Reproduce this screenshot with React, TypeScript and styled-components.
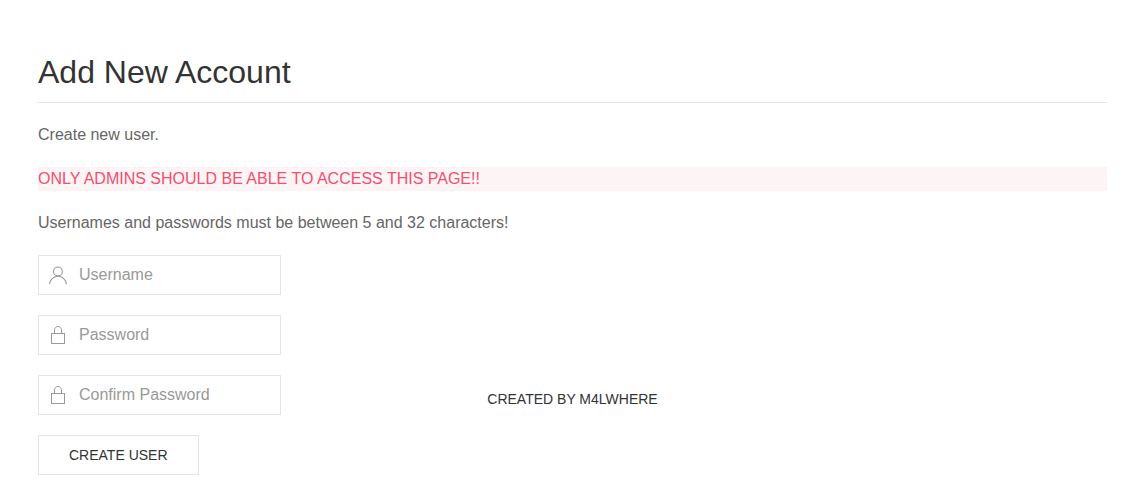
import React from "react";
import styled, { createGlobalStyle } from "styled-components";

const GlobalStyle = createGlobalStyle`
  *, *::before, *::after { box-sizing: border-box; }
  body {
    margin: 0;
    background: #fff;
    color: #666;
    font: 16px/24px "Liberation Sans", Arial, sans-serif;
  }
`;

const Page = styled.main`
  padding: 52px 34px 12px 38px;
`;

const Title = styled.h1`
  margin: 0 0 20px;
  padding-bottom: 10px;
  border-bottom: 1px solid #e5e5e5;
  color: #333;
  font-size: 32px;
  font-weight: 400;
  line-height: 40px;
`;

const Text = styled.p`
  margin: 0 0 20px;
`;

const Warning = styled(Text)`
  background: #fef4f6;
  color: #f0506e;
`;

const Columns = styled.div`
  display: grid;
  grid-template-columns: 1fr auto 1fr;
`;

const Form = styled.form`
  display: flex;
  flex-direction: column;
  align-items: flex-start;
  gap: 20px;
`;

const Field = styled.label`
  display: flex;
  align-items: center;
  width: 243px;
  height: 40px;
  border: 1px solid #e5e5e5;
  background: #fff;
  color: #999;
  &:focus-within { border-color: #1e87f0; }
`;

const FieldIcon = styled.svg`
  flex: none;
  width: 20px;
  height: 20px;
  margin: 0 10px 0 9px;
  fill: none;
  stroke: currentColor;
`;

const Input = styled.input`
  flex: 1;
  min-width: 0;
  height: 100%;
  padding: 0 10px 0 1px;
  border: 0;
  outline: 0;
  background: none;
  color: #666;
  font: inherit;
  &::placeholder { color: #999; opacity: 1; }
`;

const SubmitButton = styled.button`
  height: 40px;
  padding: 0 30px;
  border: 1px solid #e5e5e5;
  background: #fff;
  color: #333;
  font: inherit;
  font-size: 14px;
  line-height: 38px;
  text-transform: uppercase;
  cursor: pointer;
`;

const Credit = styled.a`
  align-self: end;
  margin-bottom: 36px;
  color: #333;
  font-size: 14px;
  line-height: 80px;
  text-decoration: none;
  text-transform: uppercase;
`;

const UserIcon = () => (
  <FieldIcon viewBox="0 0 20 20" strokeWidth="1.1" aria-hidden="true">
    <circle cx="9.9" cy="6.4" r="4.4" />
    <path d="M1.5,19 C2.3,14.5 5.8,11.2 10,11.2 C14.2,11.2 17.7,14.6 18.5,19.2" />
  </FieldIcon>
);

const LockIcon = () => (
  <FieldIcon viewBox="0 0 20 20" aria-hidden="true">
    <rect x="3.5" y="8.5" width="13" height="10" />
    <path d="M6.5,8 L6.5,4.88 C6.5,3.01 8.07,1.5 10,1.5 C11.93,1.5 13.5,3.01 13.5,4.88 L13.5,8" />
  </FieldIcon>
);

export default function App() {
  return (
    <>
      <GlobalStyle />
      <Page>
        <Title>Add New Account</Title>
        <Text>Create new user.</Text>
        <Warning>ONLY ADMINS SHOULD BE ABLE TO ACCESS THIS PAGE!!</Warning>
        <Text>Usernames and passwords must be between 5 and 32 characters!</Text>
        <Columns>
          <Form onSubmit={(event: React.FormEvent) => event.preventDefault()}>
            <Field>
              <UserIcon />
              <Input type="text" name="username" placeholder="Username" aria-label="Username" />
            </Field>
            <Field>
              <LockIcon />
              <Input type="password" name="password" placeholder="Password" aria-label="Password" />
            </Field>
            <Field>
              <LockIcon />
              <Input type="password" name="confirm" placeholder="Confirm Password" aria-label="Confirm Password" />
            </Field>
            <SubmitButton type="submit">Create user</SubmitButton>
          </Form>
          <Credit href="#">Created by m4lwhere</Credit>
        </Columns>
      </Page>
    </>
  );
}
